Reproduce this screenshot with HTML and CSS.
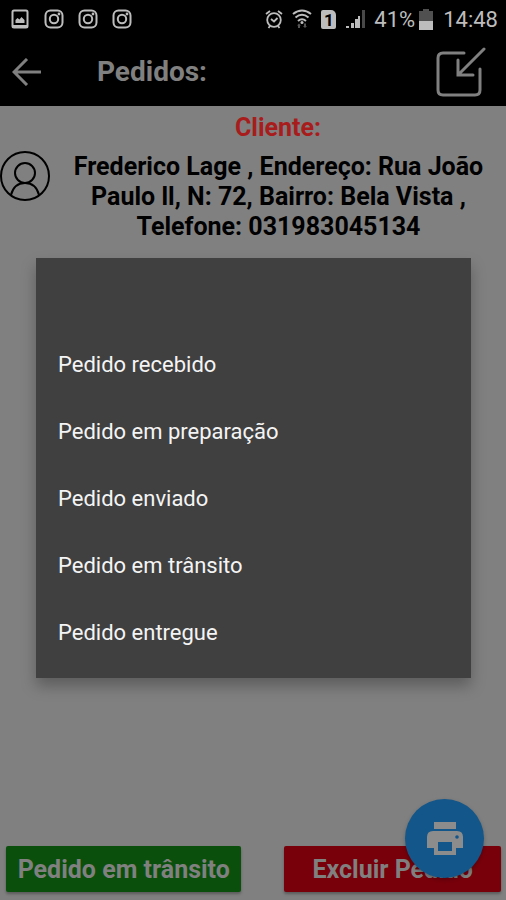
FILE: index.html
```html
<!DOCTYPE html>
<html lang="pt-BR">
<head>
<meta charset="utf-8">
<meta name="viewport" content="width=device-width, initial-scale=1">
<title>Pedidos</title>
<link rel="stylesheet" href="styles.css">
</head>
<body>
<svg class="defs" aria-hidden="true">
  <symbol id="instagram" viewBox="0 0 20 20">
    <rect x="1.5" y="1.5" width="17" height="17" rx="5" fill="none" stroke="currentColor" stroke-width="2"/>
    <circle cx="10" cy="10" r="4.2" fill="none" stroke="currentColor" stroke-width="2"/>
    <circle cx="15" cy="5" r="1.4" fill="currentColor"/>
  </symbol>
</svg>
<div class="screen">
  <div class="status">
    <div class="notices">
      <svg viewBox="0 0 20 20"><rect x="2.5" y="1.5" width="15" height="17" rx="1.5" fill="none" stroke="currentColor" stroke-width="2"/><path d="M5.500 14v-3l2-2 2 1.500 2-2.500 3 3v3z" fill="currentColor"/><path d="M2 16h16v3H2z" fill="currentColor"/></svg>
      <svg><use href="#instagram"/></svg>
      <svg><use href="#instagram"/></svg>
      <svg><use href="#instagram"/></svg>
    </div>
    <div class="signals">
      <svg class="alarm" viewBox="0 0 18 20"><g fill="none" stroke="currentColor" stroke-width="1.800"><circle cx="9" cy="11" r="6.800"/><path d="M1 5l4-3M17 5l-4-3M3.500 19l1.500-2M14.500 19L13 17M6 10l3 2.500L12.500 9"/></g></svg>
      <svg class="wifi" viewBox="0 0 20 20"><g fill="none" stroke="currentColor" stroke-width="2"><path d="M1 5Q10-2 19 5M3.500 8.500Q10 3 16.500 8.500M6 12q4-3.500 8 0"/></g><circle cx="10" cy="13.500" r="1.500" fill="currentColor"/><path d="M5 16.500l2-2 2 2H8V19H6v-2.500zM11 17h1v-2.500h2V17h1l-2 2z" fill="#555"/></svg>
      <span class="sim">1</span>
      <svg class="bars" viewBox="0 0 20 20"><path d="M1 17h3v2H1zM6 14h3v5H6zM10 10h3v9h-3z" fill="currentColor"/><path d="M13 7h2v12h-2z" fill="currentColor"/><path d="M17 1h3v18h-3z" fill="#484848"/></svg>
      <span class="percent">41%</span>
      <svg class="battery" viewBox="0 0 14 21"><path d="M4 0h6v2h4v10H0V2h4z" fill="#505050"/><path d="M0 12h14v9H0z" fill="currentColor"/></svg>
      <time>14:48</time>
    </div>
  </div>
  <header class="toolbar">
    <button class="icon back" aria-label="Voltar"><svg viewBox="0 0 30 28"><path d="M29 14H2M15 1L2 14l13 13" fill="none" stroke="currentColor" stroke-width="3"/></svg></button>
    <h1>Pedidos:</h1>
    <button class="icon receive" aria-label="Importar"><svg viewBox="0 0 50 50"><g fill="none" stroke="currentColor" stroke-width="3" stroke-linecap="round"><path d="M28 6H7q-5 0-5 5v32q0 5 5 5h32q5 0 5-5V22"/><path d="M48 2L22 28M22 13v15h15"/></g></svg></button>
  </header>
  <main>
    <h2>Cliente:</h2>
    <section class="client">
      <svg class="avatar" viewBox="0 0 50 50"><g fill="none" stroke="#000" stroke-width="2"><circle cx="25" cy="25" r="24"/><circle cx="25" cy="22" r="10"/><path d="M11 44c2-8 7-12 14-12s12 4 14 12"/></g></svg>
      <p>Frederico Lage , Endereço: Rua João Paulo ll, N: 72, Bairro: Bela Vista , Telefone: 031983045134</p>
    </section>
  </main>
  <footer>
    <button class="action transit">Pedido em trânsito</button>
    <button class="action remove">Excluir Pedido</button>
    <button class="print" aria-label="Imprimir"><svg viewBox="0 0 36 34"><path d="M7 0h22v7H7zM6 9h24q6 0 6 6v11h-7v7H7v-7H0V15q0-6 6-6zM11 20v9h14v-9z" fill="currentColor" fill-rule="evenodd"/><circle cx="30" cy="15" r="1.800" fill="#12568a"/></svg></button>
  </footer>
  <div class="menu" role="menu">
    <button role="menuitem">Pedido recebido</button>
    <button role="menuitem">Pedido em preparação</button>
    <button role="menuitem">Pedido enviado</button>
    <button role="menuitem">Pedido em trânsito</button>
    <button role="menuitem">Pedido entregue</button>
  </div>
</div>
</body>
</html>
```
FILE: styles.css
```css
* { box-sizing: border-box; }
body, h1, h2, p { margin: 0; }
body { background: #808080; font-family: Roboto, "Liberation Sans", sans-serif; color: #000; }
button { border: 0; padding: 0; background: none; color: inherit; font: inherit; cursor: pointer; }
svg { display: block; flex: none; }
.defs { position: absolute; width: 0; height: 0; }
.screen { position: relative; display: flex; flex-direction: column; min-height: 100vh; }

.status { display: flex; align-items: center; justify-content: space-between; height: 38px; padding: 0 8px 0 10px; background: #000; color: #bdbdbd; }
.notices { display: flex; gap: 14px; }
.notices svg { width: 20px; height: 20px; }
.signals { display: flex; align-items: center; font-size: 22px; }
.alarm { width: 18px; height: 20px; }
.wifi { width: 20px; height: 20px; margin-left: 9px; }
.sim { width: 15px; height: 19px; margin-left: 9px; border-radius: 2px 5px 2px 2px; background: #bdbdbd; color: #000; font-size: 17px; font-weight: 700; line-height: 20px; text-align: center; }
.bars { width: 20px; height: 20px; margin-left: 9px; }
.percent { margin-left: 9px; }
.battery { width: 14px; height: 21px; margin-left: 4px; }
.signals time { margin-left: 10px; }

.toolbar { display: flex; align-items: center; height: 68px; padding: 0 20px 0 12px; background: #000; color: #808080; }
.back svg { width: 30px; height: 28px; }
.toolbar h1 { flex: 1; margin-left: 55px; font-size: 28px; font-weight: 700; line-height: 36px; }
.receive svg { width: 50px; height: 50px; }

main { flex: 1; }
h2 { padding: 7px 0 0 50px; color: #a81c1c; font-size: 25px; font-weight: 700; line-height: 30px; text-align: center; }
.client { display: flex; align-items: flex-start; gap: 15px; padding: 8px 14px 0 0; }
.avatar { width: 50px; height: 50px; }
.client p { flex: 1; margin-top: 1px; font-size: 25px; font-weight: 700; line-height: 30px; text-align: center; }

footer { position: relative; display: flex; justify-content: space-between; gap: 43px; padding: 0 5px 8px 6px; }
.action { height: 46px; border-radius: 2px; color: #808080; font-size: 25px; font-weight: 700; box-shadow: 0 2px 3px rgba(0, 0, 0, .3); }
.transit { flex: 236; background: #0a500c; }
.remove { flex: 217; background: #78000b; }
.print { position: absolute; right: 22px; bottom: 22px; display: grid; place-items: center; width: 79px; height: 79px; border-radius: 50%; background: #12568a; color: #8c8c8c; box-shadow: 0 2px 4px rgba(0, 0, 0, .25); }
.print svg { width: 36px; height: 34px; }

.menu { position: absolute; top: 258px; left: 36px; right: 35px; display: flex; flex-direction: column; padding: 73px 0 12px; background: #404040; color: #f4f4f4; box-shadow: 0 8px 14px rgba(0, 0, 0, .28); }
.menu button { padding: 0 22px; font-size: 22px; line-height: 67px; text-align: left; }
```
